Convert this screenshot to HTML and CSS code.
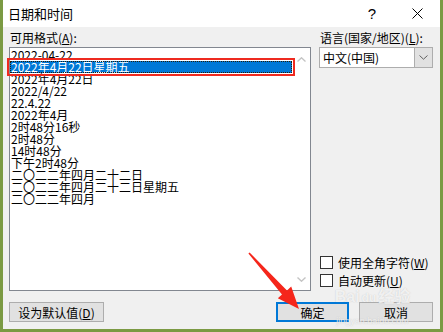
FILE: index.html
```html
<!DOCTYPE html>
<html lang="zh-CN">
<head>
    <meta charset="UTF-8">
    <title>日期和时间</title>
    <link rel="stylesheet" href="styles.css">
</head>
<body>
    <div class="window">
        <div class="titlebar">
            <span class="title">日期和时间</span>
            <span class="help">?</span>
            <span class="close">
                <svg width="11" height="11" viewBox="0 0 11 11"><path d="M0.5 0.5 L10.5 10.5 M10.5 0.5 L0.5 10.5" stroke="#000" stroke-width="1" fill="none"/></svg>
            </span>
        </div>

        <div class="content">
            <div class="main">
                <div class="left">
                    <div class="label">可用格式(<u>A</u>):</div>
                    <div class="listbox">
                        <ul class="items">
                            <li>2022-04-22</li>
                            <li class="selected">2022年4月22日星期五</li>
                            <li>2022年4月22日</li>
                            <li>2022/4/22</li>
                            <li>22.4.22</li>
                            <li>2022年4月</li>
                            <li>2时48分16秒</li>
                            <li>2时48分</li>
                            <li>14时48分</li>
                            <li>下午2时48分</li>
                            <li>二〇二二年四月二十二日</li>
                            <li>二〇二二年四月二十二日星期五</li>
                            <li>二〇二二年四月</li>
                        </ul>
                        <div class="scrollbar">
                            <svg width="9" height="5" viewBox="0 0 9 5"><path d="M0.5 4.5 L4.5 0.8 L8.5 4.5" stroke="#c4c4c4" stroke-width="1.4" fill="none"/></svg>
                            <svg width="9" height="5" viewBox="0 0 9 5"><path d="M0.5 0.5 L4.5 4.2 L8.5 0.5" stroke="#c4c4c4" stroke-width="1.4" fill="none"/></svg>
                        </div>
                    </div>
                </div>

                <div class="right">
                    <div class="label">语言(国家/地区)(<u>L</u>):</div>
                    <div class="select">
                        <span class="select-value">中文(中国)</span>
                        <span class="select-drop">
                            <svg width="9" height="5" viewBox="0 0 9 5"><path d="M0.5 0.5 L4.5 4.2 L8.5 0.5" stroke="#606060" stroke-width="1" fill="none"/></svg>
                        </span>
                    </div>
                    <div class="checks">
                        <div class="check"><span class="box"></span>使用全角字符(<u>W</u>)</div>
                        <div class="check"><span class="box"></span>自动更新(<u>U</u>)</div>
                    </div>
                </div>
            </div>

            <div class="footer">
                <button class="btn btn-default">设为默认值(<u>D</u>)</button>
                <div class="actions">
                    <button class="btn btn-ok">确定</button>
                    <button class="btn btn-cancel">取消</button>
                </div>
            </div>
        </div>

        <!-- annotation arrow + watermark sit on top of the dialog -->
        <svg class="arrow" width="443" height="332" viewBox="0 0 443 332">
            <polygon points="248.4,253.6 249.6,252.4 287,290.4 291.2,286.6 299,309 277.8,298.2 282,294.5" fill="#f5261b"/>
        </svg>
        <div class="watermark">
            <span class="wm-big">Bai<span class="wm-paw">du</span>经验</span>
            <span class="wm-small">jingyan.baidu.com</span>
        </div>
    </div>
</body>
</html>
```

FILE: styles.css
```css
body {
    margin: 0;
    padding: 0;
    font-family: "Noto Sans CJK SC", "Liberation Sans", sans-serif;
    font-size: 12px;
    color: #000;
}

.window {
    position: relative;
    width: 443px;
    height: 332px;
    box-sizing: border-box;
    border: 3px solid #7b9a43;
    border-top: 0;
    background: #f0f0f0;
    display: flex;
    flex-direction: column;
}

/* Title bar */
.titlebar {
    height: 27px;
    background: #fff;
    display: flex;
    align-items: center;
    padding-left: 5px;
    flex-shrink: 0;
}

.title {
    font-size: 13px;
}

.help {
    margin-left: auto;
    width: 44px;
    text-align: center;
    font-family: "Liberation Sans", sans-serif;
    font-size: 15px;
}

.close {
    width: 46px;
    display: flex;
    justify-content: center;
    align-items: center;
}

/* Body */
.content {
    flex: 1;
    display: flex;
    flex-direction: column;
    padding: 4px 7px 7px 6px;
}

.main {
    flex: 1;
    display: flex;
    gap: 8px;
}

.left {
    width: 302px;
    display: flex;
    flex-direction: column;
}

.right {
    width: 114px;
    display: flex;
    flex-direction: column;
}

.label {
    height: 16px;
    line-height: 14px;
    padding-left: 1px;
    white-space: nowrap;
}

.listbox {
    flex: 1;
    display: flex;
    border: 1px solid #828790;
    background: #fff;
}

.items {
    flex: 1;
    list-style: none;
    margin: 0;
    padding: 1px 0 0 0;
}

.items li {
    height: 12px;
    line-height: 12px;
    padding-left: 1px;
    white-space: nowrap;
}

.items li.selected {
    position: relative;
    background: #0078d7;
    color: #fff;
    outline: 2px solid #ee2a20;
    outline-offset: 1px;
}

.items li.selected::after {
    content: "";
    position: absolute;
    inset: 0;
    border: 1px dotted #2b1d05;
}

.scrollbar {
    width: 18px;
    display: flex;
    flex-direction: column;
    justify-content: space-between;
    align-items: center;
    padding: 9px 0 8px;
}

/* Language dropdown */
.select {
    height: 21px;
    box-sizing: border-box;
    display: flex;
    border: 1px solid #adadad;
    background: #fff;
}

.select-value {
    flex: 1;
    padding-left: 3px;
    line-height: 19px;
}

.select-drop {
    width: 17px;
    background: #e1e1e1;
    border-left: 1px solid #adadad;
    display: flex;
    align-items: center;
    justify-content: center;
}

.checks {
    margin-top: auto;
    padding-bottom: 2px;
}

.check {
    display: flex;
    align-items: center;
    height: 18px;
    white-space: nowrap;
}

.check .box {
    width: 13px;
    height: 13px;
    box-sizing: border-box;
    border: 1px solid #333;
    background: #fff;
    margin: 0 5px 0 1px;
}

/* Buttons */
.footer {
    display: flex;
    justify-content: space-between;
    height: 20px;
    margin-top: 11px;
}

.actions {
    display: flex;
    gap: 10px;
}

.btn {
    height: 20px;
    box-sizing: border-box;
    border: 1px solid #adadad;
    background: #e1e1e1;
    font-family: inherit;
    font-size: 12px;
    padding: 0;
    color: #000;
}

.btn-default {
    width: 95px;
}

.btn-ok {
    width: 73px;
    border: 2px solid #0078d7;
}

.btn-cancel {
    width: 74px;
}

/* Overlays */
.arrow {
    position: absolute;
    top: 0;
    left: -3px;
    pointer-events: none;
}

.watermark {
    position: absolute;
    left: 322px;
    top: 289px;
    width: 95px;
    display: flex;
    flex-direction: column;
    align-items: center;
    color: rgba(255, 255, 255, 0.75);
    text-shadow: 0 0 1px rgba(150, 150, 150, 0.5);
    pointer-events: none;
}

.wm-big {
    font-family: "Liberation Sans", "Noto Sans CJK SC", sans-serif;
    font-size: 16px;
    font-weight: bold;
    line-height: 15px;
}

.wm-paw {
    font-size: 12px;
    margin: 0 2px;
}

.wm-small {
    font-family: "Liberation Sans", sans-serif;
    font-size: 9px;
    line-height: 10px;
    margin-top: 10px;
}
```
